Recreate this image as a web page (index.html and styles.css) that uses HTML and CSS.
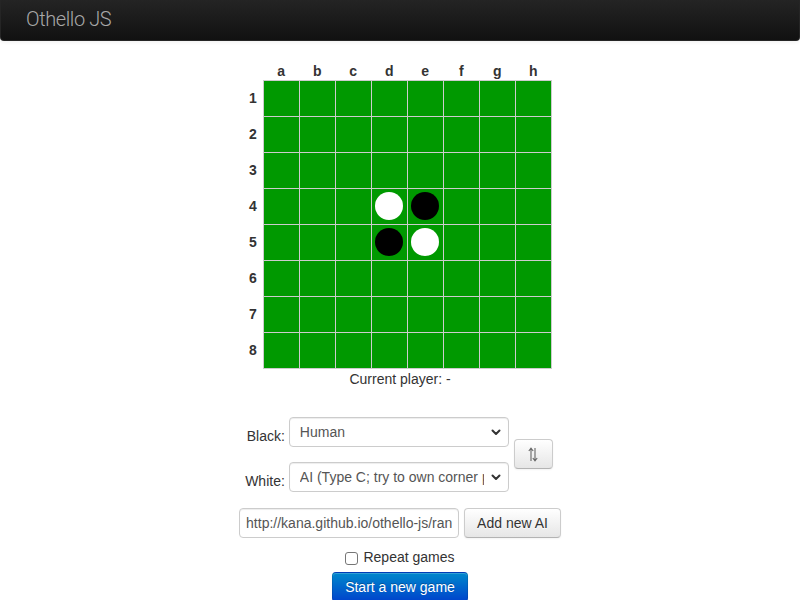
FILE: index.html
```html
<!DOCTYPE html>
<html lang="en">
<head>
  <meta charset="UTF-8" />
  <title>Othello JS</title>
  <link rel="stylesheet" href="styles.css">
</head>
<body>
  <div class="navbar">
    <a class="brand" href="#">Othello JS</a>
  </div>

  <div class="game">
    <table class="board">
      <tr class="cols">
        <th></th><th>a</th><th>b</th><th>c</th><th>d</th><th>e</th><th>f</th><th>g</th><th>h</th>
      </tr>
      <tr><th>1</th><td></td><td></td><td></td><td></td><td></td><td></td><td></td><td></td></tr>
      <tr><th>2</th><td></td><td></td><td></td><td></td><td></td><td></td><td></td><td></td></tr>
      <tr><th>3</th><td></td><td></td><td></td><td></td><td></td><td></td><td></td><td></td></tr>
      <tr><th>4</th><td></td><td></td><td></td><td><span class="disc white"></span></td><td><span class="disc black"></span></td><td></td><td></td><td></td></tr>
      <tr><th>5</th><td></td><td></td><td></td><td><span class="disc black"></span></td><td><span class="disc white"></span></td><td></td><td></td><td></td></tr>
      <tr><th>6</th><td></td><td></td><td></td><td></td><td></td><td></td><td></td><td></td></tr>
      <tr><th>7</th><td></td><td></td><td></td><td></td><td></td><td></td><td></td><td></td></tr>
      <tr><th>8</th><td></td><td></td><td></td><td></td><td></td><td></td><td></td><td></td></tr>
    </table>

    <p class="status">Current player: -</p>

    <div class="players">
      <label class="player-label" for="blackSelect">Black:</label>
      <span class="select-wrap">
        <select id="blackSelect">
          <option>Human</option>
        </select>
        <svg class="chevron" width="10" height="7" viewBox="0 0 10 7"><path d="M1.5 1.5 L5 5 L8.5 1.5" fill="none" stroke="#333" stroke-width="2" stroke-linecap="round" stroke-linejoin="round"/></svg>
      </span>
      <button class="btn swap" type="button" title="Swap">
        <svg width="10" height="15" viewBox="0 0 10 15"><path d="M3 14 V1.5 M0.8 4 L3 1.2 L5.2 4 M7 1 V13.5 M4.8 11 L7 13.8 L9.2 11" fill="none" stroke="#666" stroke-width="1.1"/></svg>
      </button>
      <label class="player-label" for="whiteSelect">White:</label>
      <span class="select-wrap">
        <select id="whiteSelect">
          <option>AI (Type C; try to own corner places)</option>
        </select>
        <svg class="chevron" width="10" height="7" viewBox="0 0 10 7"><path d="M1.5 1.5 L5 5 L8.5 1.5" fill="none" stroke="#333" stroke-width="2" stroke-linecap="round" stroke-linejoin="round"/></svg>
      </span>
    </div>

    <div class="add-ai">
      <input type="text" value="http://kana.github.io/othello-js/random.js" />
      <button class="btn" type="button">Add new AI</button>
    </div>

    <label class="repeat"><input type="checkbox" /> Repeat games</label>

    <button class="btn btn-primary" type="button">Start a new game</button>
  </div>
</body>
</html>
```

FILE: styles.css
```css
* {
  box-sizing: border-box;
}
body {
  margin: 0;
  font-family: "Liberation Sans", Arial, sans-serif;
  font-size: 14px;
  line-height: 20px;
  color: #333;
  background: #fff;
}

/* Top bar */
.navbar {
  height: 41px;
  background: linear-gradient(to bottom, #242424, #111);
  border: 1px solid #252525;
  border-top: none;
  border-radius: 0 0 4px 4px;
  box-shadow: 0 1px 4px rgba(0, 0, 0, 0.065);
}
.brand {
  display: block;
  padding: 9px 0 0 25px;
  font-family: Roboto, "Liberation Sans", sans-serif;
  font-weight: 300;
  font-size: 20px;
  line-height: 20px;
  letter-spacing: -0.4px;
  color: #a8a8a8;
  text-decoration: none;
}

/* Main column */
.game {
  display: flex;
  flex-direction: column;
  align-items: center;
  padding-top: 19px;
}

/* Board */
.board {
  border-collapse: collapse;
  margin-left: -3px;
}
.board th {
  font-weight: bold;
  font-size: 14px;
  padding: 0;
  text-align: center;
}
.board tr th:first-child {
  width: 18px;
  padding-right: 2px;
}
.board .cols th {
  height: 20px;
  vertical-align: bottom;
  line-height: 17px;
}
.board td {
  box-sizing: content-box;
  width: 35px;
  height: 35px;
  padding: 0;
  background: #009900;
  border: 1px solid #ccc;
  text-align: center;
  vertical-align: middle;
}
.disc {
  display: block;
  width: 28px;
  height: 28px;
  margin: 0 auto;
  border-radius: 50%;
}
.disc.white {
  background: #fff;
}
.disc.black {
  background: #000;
}

.status {
  margin: 0;
  line-height: 20px;
}

/* Player selection */
.players {
  display: grid;
  grid-template-columns: auto 220px auto;
  column-gap: 4px;
  row-gap: 15px;
  align-items: center;
  margin-top: 28px;
  margin-left: -2px;
}
.player-label {
  padding-top: 9px;
  text-align: right;
}
.select-wrap {
  position: relative;
  display: block;
}
select,
input[type="text"] {
  width: 220px;
  height: 30px;
  padding: 4px 10px;
  border: 1px solid #ccc;
  border-radius: 4px;
  background: #fff;
  font-family: inherit;
  font-size: 14px;
  color: #555;
  box-shadow: inset 0 1px 1px rgba(0, 0, 0, 0.075);
}
select {
  appearance: none;
  -webkit-appearance: none;
  padding-right: 24px;
}
.chevron {
  position: absolute;
  right: 8px;
  top: 12px;
  pointer-events: none;
}
input[type="text"] {
  padding: 4px 6px;
}

/* Buttons */
.btn {
  height: 30px;
  padding: 4px 12px;
  font-family: inherit;
  font-size: 14px;
  line-height: 20px;
  color: #333;
  text-shadow: 0 1px 1px rgba(255, 255, 255, 0.75);
  background: linear-gradient(to bottom, #fff, #e6e6e6);
  border: 1px solid #ccc;
  border-bottom-color: #b3b3b3;
  border-radius: 4px;
  box-shadow: inset 0 1px 0 rgba(255, 255, 255, 0.2), 0 1px 2px rgba(0, 0, 0, 0.05);
  cursor: pointer;
}
.swap {
  grid-column: 3;
  grid-row: 1 / 3;
  width: 39px;
  margin-left: 1px;
  padding: 0;
  display: flex;
  align-items: center;
  justify-content: center;
}
.btn-primary {
  margin-top: 5px;
  color: #fff;
  text-shadow: 0 -1px 0 rgba(0, 0, 0, 0.25);
  background: linear-gradient(to bottom, #0088cc, #0044cc);
  border-color: rgba(0, 0, 0, 0.1) rgba(0, 0, 0, 0.1) rgba(0, 0, 0, 0.25);
}

.add-ai {
  display: flex;
  gap: 5px;
  margin-top: 16px;
}

/* Repeat checkbox */
.repeat {
  display: flex;
  align-items: center;
  margin-top: 9px;
}
.repeat input {
  appearance: none;
  -webkit-appearance: none;
  width: 13px;
  height: 13px;
  margin: 3px 5px 0 0;
  border: 1px solid #767676;
  border-radius: 3px;
  background: #fff;
}
```
